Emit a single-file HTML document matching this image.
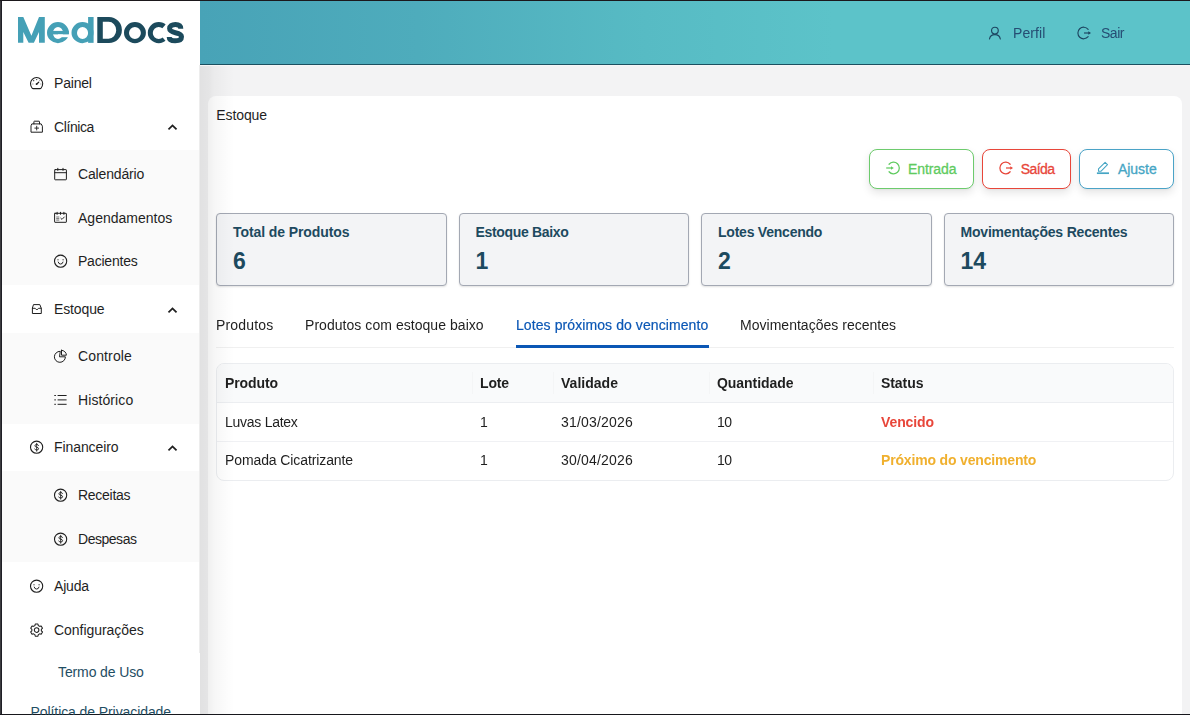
<!DOCTYPE html>
<html lang="pt-BR"><head><meta charset="utf-8"><title>MedDocs - Estoque</title>
<style>
*{box-sizing:border-box;margin:0;padding:0}
html,body{width:1190px;height:715px;overflow:hidden;background:#fff}
body{position:relative;font-family:"Liberation Sans",sans-serif;font-size:14px;color:#1f1f1f}
.abs{position:absolute}
.t{position:absolute;white-space:pre;line-height:1;font-size:14px}
.m{-webkit-text-stroke:.3px currentColor}
.g{will-change:transform}
.a{-webkit-text-stroke:.2px currentColor}
.ic{position:absolute;width:14px;height:14px;overflow:visible;fill:none;stroke:currentColor;stroke-width:1;stroke-linecap:round;stroke-linejoin:round}
.ic .f{fill:currentColor;stroke:none}
/* window frame */
#frameL0{left:0;top:0;width:1px;height:715px;background:#3b3b3f}
#frameL1{left:1px;top:0;width:1px;height:715px;background:#1f1f25}
#frameT{left:0;top:0;width:1190px;height:1px;background:#1b181c}
#frameB{left:0;top:714px;width:1190px;height:1px;background:#17171c}
/* sidebar */
#side{left:2px;top:1px;width:198px;height:713px;background:#fff}
.sub{position:absolute;left:2px;width:197px;background:#fafafa}
#menuBorder{left:199px;top:65px;width:1px;height:588px;background:#ededed}
/* header */
#hdr{left:200px;top:1px;width:990px;height:63px;background:linear-gradient(90deg,#48a3b7 0%,#4eacbc 22%,#57bbc4 45%,#5cc3c9 64%,#5cc3c9 100%)}
#hdrB{left:200px;top:64px;width:990px;height:1px;background:#1b5060}
/* content */
#content{left:200px;top:65px;width:990px;height:649px;background:#f3f3f4}
#contentTop{left:200px;top:65px;width:990px;height:1px;background:#f6f6f6}
#card{left:208px;top:96px;width:974px;height:640px;background:#fff;border-radius:8px}
#shade{left:200px;top:66px;width:33px;height:648px;background:linear-gradient(90deg,rgba(0,0,0,.075) 0,rgba(0,0,0,.06) 9px,rgba(0,0,0,.035) 14px,rgba(0,0,0,0) 34px)}
/* buttons */
.btn{position:absolute;top:149px;height:40px;border:1px solid;border-radius:8px;background:#fff;box-shadow:0 4px 8px rgba(0,0,0,.10),0 1px 2px rgba(0,0,0,.04)}
/* stat cards */
.stat{position:absolute;top:213px;height:73px;width:230.5px;background:#f3f4f6;border:1px solid #a3a8b3;border-radius:4px;box-shadow:0 1px 2px rgba(0,0,0,.12)}
/* tabs */
#tabLine{left:216px;top:347px;width:958px;height:1px;background:#f0f0f0}
#ink{left:515.5px;top:345px;width:193px;height:2.6px;background:#0b57b5}
/* table */
#tbl{left:216px;top:363px;width:958px;height:118px;border:1px solid #ebedf0;border-radius:8px;background:#fff;overflow:hidden}
#thead{left:0;top:0;width:956px;height:39px;background:#f9fafb;border-bottom:1px solid #eceef1}
.rowB{position:absolute;left:0;width:956px;height:1px;background:#f0f1f4}
.vsep{position:absolute;top:8px;width:1px;height:22px;background:#f4f5f6}
</style></head><body>
<div class="abs" id="side"></div>
<div class="sub" style="top:150px;height:135px"></div>
<div class="sub" style="top:332.5px;height:91px"></div>
<div class="sub" style="top:471px;height:91px"></div>
<div class="abs" id="menuBorder"></div>
<div class="abs" id="hdr"></div>
<div class="abs" id="hdrB"></div>
<div class="abs" id="content"></div>
<div class="abs" id="contentTop"></div>
<div class="abs" id="card"></div>
<div class="btn" style="left:869px;width:105px;border-color:#6dcb6d"></div>
<div class="btn" style="left:982px;width:89px;border-color:#e8463a"></div>
<div class="btn" style="left:1079px;width:95px;border-color:#4aa3c7"></div>
<div class="stat" style="left:216px"></div>
<div class="stat" style="left:458.5px"></div>
<div class="stat" style="left:701px"></div>
<div class="stat" style="left:943.5px"></div>
<div class="abs" id="tabLine"></div>
<div class="abs" id="ink"></div>
<div class="abs" id="tbl">
  <div class="abs" id="thead"></div>
  <div class="vsep" style="left:255px"></div>
  <div class="vsep" style="left:336px"></div>
  <div class="vsep" style="left:492px"></div>
  <div class="vsep" style="left:656px"></div>
  <div class="rowB" style="top:77px"></div>
</div>
<div class="abs" id="shade"></div>
<div class="abs" id="frameL0"></div>
<div class="abs" id="frameL1"></div>
<div class="abs" id="frameT"></div>
<div class="abs" id="frameB"></div>

<span class="t" style="left:54.0px;top:76.00px;letter-spacing:-0.187px;">Painel</span>
<span class="t" style="left:54.0px;top:120.00px;letter-spacing:-0.400px;">Clínica</span>
<span class="t" style="left:78.0px;top:167.00px;letter-spacing:-0.152px;">Calendário</span>
<span class="t" style="left:78.0px;top:211.00px;letter-spacing:0.009px;">Agendamentos</span>
<span class="t" style="left:78.0px;top:254.00px;letter-spacing:-0.220px;">Pacientes</span>
<span class="t" style="left:54.0px;top:302.00px;letter-spacing:-0.125px;">Estoque</span>
<span class="t" style="left:78.0px;top:349.00px;letter-spacing:0.135px;">Controle</span>
<span class="t" style="left:78.0px;top:393.00px;letter-spacing:0.092px;">Histórico</span>
<span class="t" style="left:54.0px;top:440.00px;letter-spacing:-0.087px;">Financeiro</span>
<span class="t" style="left:78.0px;top:488.00px;letter-spacing:-0.271px;">Receitas</span>
<span class="t" style="left:78.0px;top:532.00px;letter-spacing:-0.471px;">Despesas</span>
<span class="t" style="left:54.0px;top:579.00px;letter-spacing:-0.163px;">Ajuda</span>
<span class="t" style="left:54.0px;top:623.00px;letter-spacing:-0.045px;">Configurações</span>
<span class="t" style="left:58.0px;top:665.00px;color:#1f4e63;letter-spacing:-0.121px;">Termo de Uso</span>
<span class="t" style="left:30.6px;top:705.00px;color:#1f4e63;letter-spacing:-0.088px;">Política de Privacidade</span>
<span class="t g" style="left:1012.7px;top:26.00px;color:#264d73;letter-spacing:0.099px;">Perfil</span>
<span class="t g" style="left:1101.3px;top:26.00px;color:#264d73;letter-spacing:-0.477px;">Sair</span>
<span class="t" style="left:216.3px;top:108.00px;letter-spacing:-0.096px;">Estoque</span>
<span class="t m" style="left:908.1px;top:162.00px;color:#60cb60;letter-spacing:-0.107px;">Entrada</span>
<span class="t m" style="left:1020.8px;top:162.00px;color:#e8463a;letter-spacing:-0.600px;">Saída</span>
<span class="t m" style="left:1117.9px;top:162.00px;color:#45a5c4;letter-spacing:-0.020px;">Ajuste</span>
<span class="t" style="left:233.0px;top:225.00px;font-weight:700;color:#1d4a5f;letter-spacing:-0.092px;">Total de Produtos</span>
<span class="t" style="left:233.0px;top:249.83px;font-size:23px;font-weight:700;color:#1d4a5f;">6</span>
<span class="t" style="left:475.5px;top:225.00px;font-weight:700;color:#1d4a5f;letter-spacing:-0.335px;">Estoque Baixo</span>
<span class="t" style="left:475.5px;top:249.83px;font-size:23px;font-weight:700;color:#1d4a5f;">1</span>
<span class="t" style="left:718.0px;top:225.00px;font-weight:700;color:#1d4a5f;letter-spacing:-0.226px;">Lotes Vencendo</span>
<span class="t" style="left:718.0px;top:249.83px;font-size:23px;font-weight:700;color:#1d4a5f;">2</span>
<span class="t" style="left:960.5px;top:225.00px;font-weight:700;color:#1d4a5f;letter-spacing:-0.199px;">Movimentações Recentes</span>
<span class="t" style="left:960.5px;top:249.83px;font-size:23px;font-weight:700;color:#1d4a5f;">14</span>
<span class="t g" style="left:216.3px;top:318.00px;letter-spacing:0.157px;">Produtos</span>
<span class="t g" style="left:305.3px;top:318.00px;letter-spacing:0.048px;">Produtos com estoque baixo</span>
<span class="t g a" style="left:516.0px;top:318.00px;color:#0b57b5;letter-spacing:0.087px;">Lotes próximos do vencimento</span>
<span class="t g" style="left:740.4px;top:318.00px;letter-spacing:0.021px;">Movimentações recentes</span>
<span class="t g" style="left:225.2px;top:376.00px;font-weight:700;letter-spacing:-0.094px;">Produto</span>
<span class="t g" style="left:480.0px;top:376.00px;font-weight:700;letter-spacing:-0.141px;">Lote</span>
<span class="t g" style="left:560.9px;top:376.00px;font-weight:700;letter-spacing:0.023px;">Validade</span>
<span class="t g" style="left:717.1px;top:376.00px;font-weight:700;letter-spacing:-0.042px;">Quantidade</span>
<span class="t g" style="left:880.5px;top:376.00px;font-weight:700;letter-spacing:-0.066px;">Status</span>
<span class="t g" style="left:225.2px;top:415.00px;letter-spacing:-0.264px;">Luvas Latex</span>
<span class="t g" style="left:480.0px;top:415.00px;">1</span>
<span class="t g" style="left:560.9px;top:415.00px;letter-spacing:0.192px;">31/03/2026</span>
<span class="t g" style="left:717.1px;top:415.00px;letter-spacing:-0.589px;">10</span>
<span class="t g" style="left:880.5px;top:415.00px;font-weight:700;color:#e8463a;letter-spacing:-0.098px;">Vencido</span>
<span class="t g" style="left:225.2px;top:453.00px;letter-spacing:-0.103px;">Pomada Cicatrizante</span>
<span class="t g" style="left:480.0px;top:453.00px;">1</span>
<span class="t g" style="left:560.9px;top:453.00px;letter-spacing:0.192px;">30/04/2026</span>
<span class="t g" style="left:717.1px;top:453.00px;letter-spacing:-0.589px;">10</span>
<span class="t g" style="left:880.5px;top:453.00px;font-weight:700;color:#f0b02e;letter-spacing:-0.167px;">Próximo do vencimento</span>
<svg class="abs" style="left:0;top:0" width="200" height="60" viewBox="0 0 200 60">
<defs>
<mask id="mE" maskUnits="userSpaceOnUse" x="40" y="10" width="40" height="40"><rect x="40" y="10" width="40" height="40" fill="#fff"/><path d="M58 34.4H72V37.2H58Z" fill="#000"/></mask>
<mask id="mC" maskUnits="userSpaceOnUse" x="140" y="10" width="40" height="40"><rect x="140" y="10" width="40" height="40" fill="#fff"/><path d="M159.1 31.9 172.3 16.7V48.6L159.1 33.4Z" fill="#000"/></mask>
</defs>
<g fill="#45a0b6">
<path d="M18 42.85V17H23.3L31.4 35.7 39 17H44.8V42.85H39V32.1L33.9 42.85H28.6L23.3 32.1V42.85Z"/>
<g mask="url(#mE)"><path fill-rule="evenodd" d="M47 32.65A10.95 10.55 0 1 0 68.9 32.65A10.95 10.55 0 1 0 47 32.65ZM52.9 32.9A5.1 6 0 1 0 63.1 32.9A5.1 6 0 1 0 52.9 32.9Z"/><rect x="52.5" y="30.9" width="16.3" height="3.5"/></g>
<path fill-rule="evenodd" d="M71.5 32.65A11 10.55 0 1 0 93.5 32.65A11 10.55 0 1 0 71.5 32.65ZM77 32.95A5.55 6.05 0 1 0 88.1 32.95A5.55 6.05 0 1 0 77 32.95Z"/>
<rect x="88.1" y="17" width="5.5" height="25.85"/>
</g>
<g fill="#1c4a5c">
<path fill-rule="evenodd" d="M97.3 17H109A12.9 13 0 0 1 109 43H97.3ZM102.8 21.8V38.7H108.6A7.6 8.45 0 0 0 108.6 21.8Z"/>
<path fill-rule="evenodd" d="M124 32.65A10.95 10.55 0 1 0 145.9 32.65A10.95 10.55 0 1 0 124 32.65ZM129 32.95A5.93 6.05 0 1 0 140.86 32.95A5.93 6.05 0 1 0 129 32.95Z"/>
<g mask="url(#mC)"><path fill-rule="evenodd" d="M147.8 32.65A10.95 10.55 0 1 0 169.7 32.65A10.95 10.55 0 1 0 147.8 32.65ZM152.8 32.95A5.95 6.05 0 1 0 164.7 32.95A5.95 6.05 0 1 0 152.8 32.95Z"/></g>
<path fill="none" stroke="#1c4a5c" stroke-width="5" d="M180.8 28.8C180.8 25.9 178.6 24.5 175.4 24.5C171.8 24.5 169.6 26.1 169.6 28.6C169.6 31.4 172.5 32.1 175.4 32.7C178.6 33.4 181.5 34.2 181.5 36.8C181.5 39.4 178.9 40.8 175.2 40.8C171.6 40.8 169.2 39.7 169.2 37"/>
</g>
</svg>

<svg class="ic" style="left:29.8px;top:76.0px;color:#1f1f1f" viewBox="0 0 14 14"><path d="M.5 7.6A6.1 6.1 0 0 1 12.7 7.6C12.7 9.8 11.9 11.4 10.9 12.3Q10.6 12.6 10.1 12.6H3.1Q2.6 12.6 2.3 12.3C1.3 11.4 .5 9.8 .5 7.6Z" stroke-width="1.1"/><path d="M6.7 8 8.7 6.2" stroke-width="1.15"/><circle class="f" cx="6.6" cy="8.1" r=".95"/><circle class="f" cx="6.7" cy="3.6" r=".6"/><circle class="f" cx="3.7" cy="4.7" r=".6"/><circle class="f" cx="9.8" cy="4.6" r=".55" opacity=".55"/><path d="M2.3 8H3.1M10.4 8H11.2" stroke-width=".9" opacity=".4"/></svg>
<svg class="ic" style="left:29.8px;top:120.1px;color:#1f1f1f" viewBox="0 0 14 14"><path d="M2.2 3.9H11.2L12.4 6.2V12.2H1V6.2Z"/><path d="M3.9 3.9V1.7Q3.9 1.2 4.4 1.2H9Q9.5 1.2 9.5 1.7V3.9"/><path d="M6.7 6.2V10M4.8 8.1H8.6" stroke-width=".9"/></svg>
<svg class="ic" style="left:53.8px;top:167.1px;color:#1f1f1f" viewBox="0 0 14 14"><rect x=".7" y="2.6" width="11.7" height="10.2" rx=".5"/><path d="M.7 5.7H12.4"/><path d="M3.8 1.3V3.4M9 1.3V3.4" stroke-width="1"/></svg>
<svg class="ic" style="left:53.8px;top:210.8px;color:#1f1f1f" viewBox="0 0 14 14"><rect x=".6" y="2.3" width="11.8" height="9" rx=".4"/><path d="M3.1 1.2V3.3M6.5 1.2V3.3M9.9 1.2V3.3" stroke-width="1.1"/><path d="M2.6 6H4.9M2.6 7.6H4.9M2.6 9.1H4.9" stroke-width=".8" opacity=".75"/><path d="M6.8 7.2 8 8.4 10.3 6" stroke-width=".95"/></svg>
<svg class="ic" style="left:53.9px;top:254.4px;color:#1f1f1f" viewBox="0 0 14 14"><circle cx="6.6" cy="7.2" r="6.1" stroke-width="1.1"/><circle class="f" cx="4" cy="5.7" r=".7" opacity=".75"/><circle class="f" cx="9.1" cy="5.7" r=".7" opacity=".75"/><path d="M4.2 8.1A2.45 2.45 0 0 0 9 8.1" stroke-width=".95"/></svg>
<svg class="ic" style="left:29.9px;top:302.2px;color:#1f1f1f" viewBox="0 0 14 14"><path d="M3.9 2.6H9.8L11.3 6.4V11.5H2.4V6.4Z"/><path d="M2.4 6.3H5.2L6.85 8 8.5 6.3H11.3" stroke-width=".95"/></svg>
<svg class="ic" style="left:54.0px;top:349.3px;color:#1f1f1f" viewBox="0 0 14 14"><path d="M5.9 2.3A5.5 5.5 0 1 0 11.4 7.8H5.9Z"/><path d="M7.5 1.3V6.2H12.4A4.9 4.9 0 0 0 7.5 1.3Z"/></svg>
<svg class="ic" style="left:54.0px;top:393.0px;color:#1f1f1f" viewBox="0 0 14 14"><path d="M3.6 2.5H12.6M3.6 6.9H12.6M3.6 11.3H12.6" stroke-linecap="butt"/><path d="M.3 2.5H1.9M.3 6.9H1.9M.3 11.3H1.9" stroke-linecap="butt"/></svg>
<svg class="ic" style="left:29.9px;top:440.4px;color:#1f1f1f" viewBox="0 0 14 14"><circle cx="6.6" cy="7.2" r="6.1" stroke-width="1.1"/><path d="M8.6 5.4Q8.3 4.5 6.7 4.5 4.9 4.5 4.9 5.8 4.9 6.8 6.7 7.2 8.6 7.6 8.6 8.7 8.6 10 6.7 10 5 10 4.7 9" stroke-width=".9"/><path d="M6.7 3.3V11.2" stroke-width=".9"/></svg>
<svg class="ic" style="left:53.9px;top:488.3px;color:#1f1f1f" viewBox="0 0 14 14"><circle cx="6.6" cy="7.2" r="6.1" stroke-width="1.1"/><path d="M8.6 5.4Q8.3 4.5 6.7 4.5 4.9 4.5 4.9 5.8 4.9 6.8 6.7 7.2 8.6 7.6 8.6 8.7 8.6 10 6.7 10 5 10 4.7 9" stroke-width=".9"/><path d="M6.7 3.3V11.2" stroke-width=".9"/></svg>
<svg class="ic" style="left:53.9px;top:532.3px;color:#1f1f1f" viewBox="0 0 14 14"><circle cx="6.6" cy="7.2" r="6.1" stroke-width="1.1"/><path d="M8.6 5.4Q8.3 4.5 6.7 4.5 4.9 4.5 4.9 5.8 4.9 6.8 6.7 7.2 8.6 7.6 8.6 8.7 8.6 10 6.7 10 5 10 4.7 9" stroke-width=".9"/><path d="M6.7 3.3V11.2" stroke-width=".9"/></svg>
<svg class="ic" style="left:29.9px;top:579.4px;color:#1f1f1f" viewBox="0 0 14 14"><circle cx="6.6" cy="7.2" r="6.1" stroke-width="1.1"/><circle class="f" cx="4" cy="5.7" r=".7" opacity=".75"/><circle class="f" cx="9.1" cy="5.7" r=".7" opacity=".75"/><path d="M4.2 8.1A2.45 2.45 0 0 0 9 8.1" stroke-width=".95"/></svg>
<svg class="ic" style="left:29.9px;top:622.9px;color:#1f1f1f" viewBox="0 0 14 14"><path d="M4.88 2.62 5.26 1.05 7.94 1.05 8.32 2.62 9.62 3.37 11.17 2.91 12.51 5.24 11.34 6.35 11.34 7.85 12.51 8.96 11.17 11.29 9.62 10.83 8.32 11.58 7.94 13.15 5.26 13.15 4.88 11.58 3.58 10.83 2.03 11.29 0.69 8.96 1.86 7.85 1.86 6.35 0.69 5.24 2.03 2.91 3.58 3.37Z" stroke-width="1.05"/><circle cx="6.6" cy="7.1" r="2.3" stroke-width="1.05"/></svg>
<svg class="ic" style="left:988.0px;top:25.5px;color:#1d4560" viewBox="0 0 14 14"><circle cx="6.9" cy="4.6" r="3.35" stroke-width="1.15"/><path d="M1.5 13A5.45 5 0 0 1 12.3 13" stroke-width="1.15"/></svg>
<svg class="ic" style="left:1077.0px;top:25.5px;color:#1d4560;stroke-width:1.15" viewBox="0 0 14 14"><path d="M11.14 10.73A5.8 5.8 0 1 1 11.14 3.27"/><path d="M7 7H12.2" stroke-linecap="butt"/><path class="f" d="M11.3 5.2 14 7 11.3 8.8Z"/></svg>
<svg class="ic" style="left:886.0px;top:161.4px;color:#60cb60;stroke-width:1.25" viewBox="0 0 14 14"><path d="M3.06 3.27A5.8 5.8 0 1 1 3.06 10.73"/><path d="M.2 7H5.6" stroke-linecap="butt"/><path class="f" d="M5 5.2 7.8 7 5 8.8Z"/></svg>
<svg class="ic" style="left:999.0px;top:161.4px;color:#e8463a;stroke-width:1.25" viewBox="0 0 14 14"><path d="M11.14 10.73A5.8 5.8 0 1 1 11.14 3.27"/><path d="M7 7H12.2" stroke-linecap="butt"/><path class="f" d="M11.3 5.2 14 7 11.3 8.8Z"/></svg>
<svg class="ic" style="left:1096.2px;top:160.3px;color:#45a5c4" viewBox="0 0 14 14"><path d="M2.5 8.9 9.1 2.3 11.5 4.7 4.9 11.3H2.5Z" stroke-width="1.05"/><path d="M.9 13.2H13" stroke-width="1.7" stroke-linecap="butt"/></svg>
<svg class="ic" style="left:165.9px;top:120.4px;color:#1f1f1f" viewBox="0 0 14 14"><path d="M3.1 8.8 6.5 5.4 9.9 8.8" stroke-width="1.8" stroke-linecap="square" stroke-linejoin="miter"/></svg>
<svg class="ic" style="left:165.9px;top:302.5px;color:#1f1f1f" viewBox="0 0 14 14"><path d="M3.1 8.8 6.5 5.4 9.9 8.8" stroke-width="1.8" stroke-linecap="square" stroke-linejoin="miter"/></svg>
<svg class="ic" style="left:165.9px;top:440.5px;color:#1f1f1f" viewBox="0 0 14 14"><path d="M3.1 8.8 6.5 5.4 9.9 8.8" stroke-width="1.8" stroke-linecap="square" stroke-linejoin="miter"/></svg>
</body></html>
